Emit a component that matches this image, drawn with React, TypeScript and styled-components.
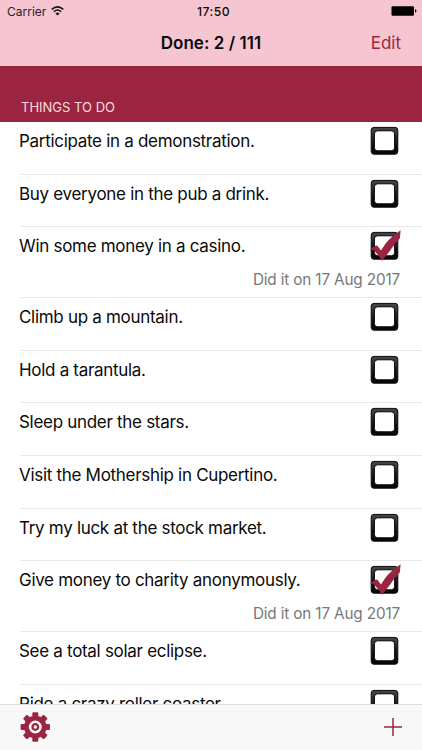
import React from 'react';
import styled, { createGlobalStyle } from 'styled-components';

const Global = createGlobalStyle`
  * { box-sizing: border-box; }
  body { margin: 0; background: #fff; }
`;
const maroon = '#9b2540';

const Screen = styled.div`
  width: 422px;
  height: 750px;
  display: flex;
  flex-direction: column;
  overflow: hidden;
  background: #fff;
  color: #0a0a0a;
  font-family: Inter, 'Liberation Sans', sans-serif;
`;
const TopBar = styled.header`
  flex: none;
  height: 65.6px;
  background: #f5c6d1;
`;
const StatusBar = styled.div`
  height: 22px;
  padding: 0 5px 0 7px;
  display: grid;
  grid-template-columns: 1fr auto 1fr;
  align-items: center;
  font-size: 12px;
`;
const Carrier = styled.div`
  display: flex;
  align-items: center;
  gap: 5px;
  color: #2b2024;
`;
const Clock = styled.div`
  padding-left: 3px;
  font-weight: 500;
  font-size: 12.2px;
  letter-spacing: 0.5px;
`;
const BatterySlot = styled.div`
  display: flex;
  justify-content: flex-end;
`;
const NavBar = styled.div`
  height: 42px;
  padding: 0 21px;
  display: grid;
  grid-template-columns: 1fr auto 1fr;
  align-items: center;
`;
const Title = styled.h1`
  grid-column: 2;
  margin: 0;
  font-size: 17px;
  font-weight: 600;
  letter-spacing: 0.05px;
`;
const EditButton = styled.button`
  justify-self: end;
  padding: 0;
  border: 0;
  background: none;
  color: ${maroon};
  font: inherit;
  font-size: 17px;
`;
const SectionHeader = styled.h2`
  flex: none;
  height: 56.4px;
  margin: 0;
  padding: 0 21px 7px;
  display: flex;
  align-items: flex-end;
  background: ${maroon};
  color: #f7dde3;
  font-size: 13px;
  line-height: 16px;
  font-weight: 400;
`;
const List = styled.ul`
  flex: 1;
  min-height: 0;
  margin: 0;
  padding: 0;
  overflow: hidden;
  list-style: none;
`;
const Row = styled.li<{ $done: boolean }>`
  height: ${p => (p.$done ? 71 : 52.6)}px;
  margin-left: 20px;
  padding: 4.6px 20px 0 0;
  border-bottom: 1px solid #e8e8e9;
`;
const RowMain = styled.div`
  height: 29px;
  display: flex;
  align-items: center;
  justify-content: space-between;
`;
const Label = styled.span`
  margin-left: -1px;
  font-size: 17px;
  line-height: 28px;
  letter-spacing: -0.3px;
  white-space: nowrap;
`;
const DoneDate = styled.div`
  padding: 9px 2px 0 0;
  text-align: right;
  color: #77777a;
  font-size: 15.3px;
  line-height: 20px;
  letter-spacing: -0.15px;
`;
const ToolBar = styled.footer`
  flex: none;
  height: 46px;
  padding: 0 20px 2px;
  display: flex;
  align-items: center;
  justify-content: space-between;
  border-top: 1px solid #dededf;
  background: #f8f8f8;
`;
const IconButton = styled.button`
  display: flex;
  padding: 0;
  border: 0;
  background: none;
  color: ${maroon};
`;
const CheckIcon = styled.svg`
  overflow: visible;
`;

const CheckBox = ({ done }: { done: boolean }) => (
  <CheckIcon width="32" height="30" viewBox="0 0 32 30">
    <defs>
      <linearGradient id="frame" x1="0" y1="0" x2="0" y2="1">
        <stop offset="0" stopColor="#45464b" />
        <stop offset="0.7" stopColor="#0c0c0d" />
        <stop offset="1" stopColor="#050505" />
      </linearGradient>
    </defs>
    <rect x="1.2" y="1.4" width="26.6" height="26.8" rx="2.8" fill="url(#frame)" stroke="#0b0b0c" />
    <rect x="4.4" y="4.8" width="20.2" height="20" rx="3.2" fill="#fff" stroke="#050505" />
    {done && (
      <path d="M-.2 18.2 6 14.6 7.4 14.7 11 19.6C14 14.5 17 10 21 6.7Q25.5 2.7 30.6-.8L29.9 7.3Q24.5 12.5 20.2 19.6L12 29.8Q7.5 23 4 19.6Z" fill={maroon} />
    )}
  </CheckIcon>
);

const items: { text: string; date?: string }[] = [
  { text: 'Participate in a demonstration.' },
  { text: 'Buy everyone in the pub a drink.' },
  { text: 'Win some money in a casino.', date: '17 Aug 2017' },
  { text: 'Climb up a mountain.' },
  { text: 'Hold a tarantula.' },
  { text: 'Sleep under the stars.' },
  { text: 'Visit the Mothership in Cupertino.' },
  { text: 'Try my luck at the stock market.' },
  { text: 'Give money to charity anonymously.', date: '17 Aug 2017' },
  { text: 'See a total solar eclipse.' },
  { text: 'Ride a crazy roller coaster' },
];

export default function App() {
  return (
    <Screen>
      <Global />
      <TopBar>
        <StatusBar>
          <Carrier>
            Carrier
            <svg width="13" height="11" viewBox="0 0 13 11" fill="none" stroke="#111" strokeWidth="1.5">
              <path d="M.7 3.4Q6.5-1.7 12.3 3.4M2.8 5.7Q6.5 2.4 10.2 5.7" />
              <path d="M4.4 7.4Q6.5 5.6 8.6 7.4L6.5 9.6Z" fill="#111" stroke="none" />
            </svg>
          </Carrier>
          <Clock>17:50</Clock>
          <BatterySlot>
            <svg width="26" height="10" viewBox="0 0 26 10">
              <rect x=".5" y=".3" width="22.5" height="9.4" rx="1.2" />
              <path d="M24 3.3q1.5.3 1.5 1.7T24 6.7Z" />
            </svg>
          </BatterySlot>
        </StatusBar>
        <NavBar>
          <Title>Done: 2 / 111</Title>
          <EditButton>Edit</EditButton>
        </NavBar>
      </TopBar>
      <SectionHeader>THINGS TO DO</SectionHeader>
      <List>
        {items.map(item => (
          <Row key={item.text} $done={!!item.date}>
            <RowMain>
              <Label>{item.text}</Label>
              <CheckBox done={!!item.date} />
            </RowMain>
            {item.date && <DoneDate>Did it on {item.date}</DoneDate>}
          </Row>
        ))}
      </List>
      <ToolBar>
        <IconButton aria-label="Settings">
          <svg width="30" height="30" viewBox="-15.3 -15 30 30" fill="currentColor">
            {[0, 45, 90, 135].map(a => (
              <rect key={a} x="-3" y="-14.7" width="6" height="29.4" rx="1.2" transform={`rotate(${a})`} />
            ))}
            <circle r="11.3" />
            <circle r="5.2" fill="none" stroke="#f8f8f8" strokeWidth="2.5" />
            <circle r="1.7" fill="#f8f8f8" />
          </svg>
        </IconButton>
        <IconButton aria-label="Add">
          <svg width="18" height="18" viewBox="0 0 18 18" stroke="currentColor" strokeWidth="1.5">
            <path d="M9 0V18M0 9H18" />
          </svg>
        </IconButton>
      </ToolBar>
    </Screen>
  );
}
